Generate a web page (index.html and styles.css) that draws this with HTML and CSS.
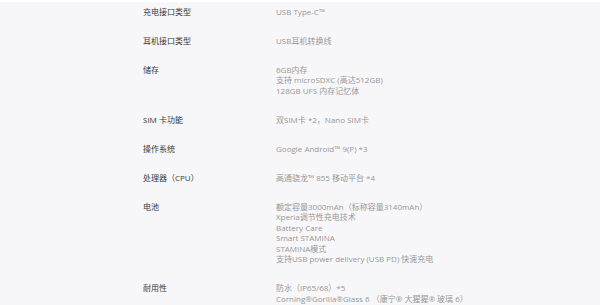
FILE: index.html
```html
<!DOCTYPE html>
<html lang="zh-CN">
<head>
<meta charset="utf-8">
<link rel="stylesheet" href="styles.css">
</head>
<body>
<div class="specs">
  <div class="row"><div class="label">充电接口类型</div><div class="value">USB Type-C™</div></div>
  <div class="row"><div class="label">耳机接口类型</div><div class="value">USB耳机转换线</div></div>
  <div class="row"><div class="label">储存</div><div class="value"><div>6GB内存</div><div>支持 microSDXC (高达512GB)</div><div>128GB UFS 内存记忆体</div></div></div>
  <div class="row"><div class="label">SIM 卡功能</div><div class="value">双SIM卡 *2，Nano SIM卡</div></div>
  <div class="row"><div class="label">操作系统</div><div class="value">Google Android™ 9(P) *3</div></div>
  <div class="row"><div class="label">处理器（CPU）</div><div class="value">高通骁龙™ 855 移动平台 *4</div></div>
  <div class="row"><div class="label">电池</div><div class="value"><div>额定容量3000mAh（标称容量3140mAh）</div><div>Xperia调节性充电技术</div><div>Battery Care</div><div>Smart STAMINA</div><div>STAMINA模式</div><div>支持USB power delivery (USB PD) 快速充电</div></div></div>
  <div class="row"><div class="label">耐用性</div><div class="value"><div>防水（IP65/68）*5</div><div>Corning®Gorilla®Glass 6 （康宁® 大猩猩® 玻璃 6）</div></div></div>
</div>
</body>
</html>
```
FILE: styles.css
```css
html, body {
  margin: 0;
  padding: 0;
}
body {
  background: #f7f6f8;
  border-top: 2px solid #ffffff;
  height: 303px;
  overflow: hidden;
  font-family: "Open Sans", "Noto Sans CJK SC", sans-serif;
  font-size: 8px;
}
.specs {
  display: flex;
  flex-direction: column;
  gap: 18.5px;
  padding: 4.75px 0 0 143px;
}
.row {
  display: flex;
  line-height: 10.5px;
}
.label {
  width: 133px;
  flex: none;
  color: #3a3a3a;
}
.value {
  color: #999;
}
```
